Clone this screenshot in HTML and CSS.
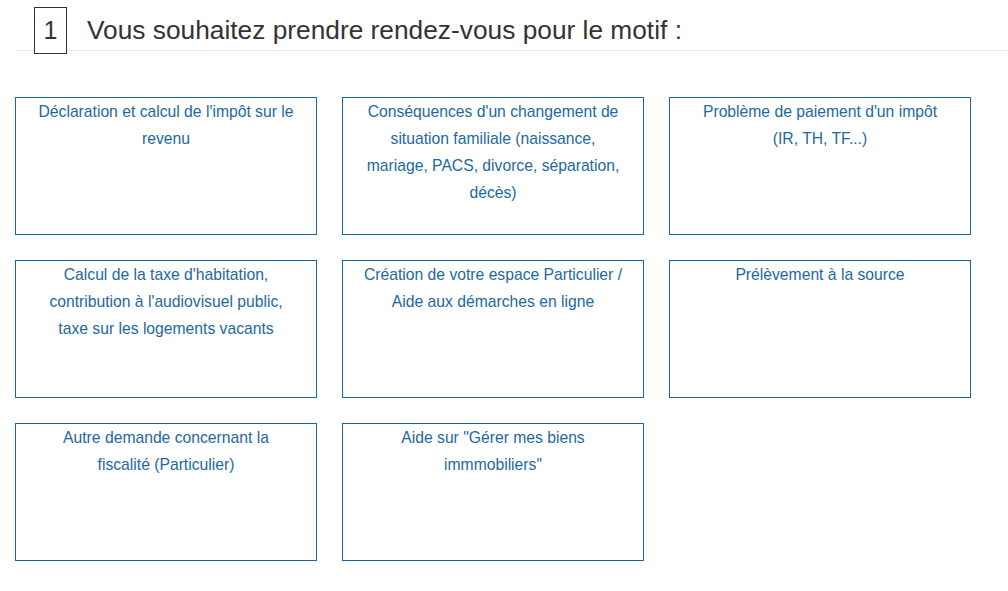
FILE: index.html
```html
<!DOCTYPE html>
<html lang="fr">
<head>
<meta charset="utf-8">
<title>Prise de rendez-vous</title>
<link rel="stylesheet" href="styles.css">
</head>
<body>
  <div class="step-head">
    <span class="step-num">1</span>
    <h2 class="step-title">Vous souhaitez prendre rendez-vous pour le motif :</h2>
  </div>
  <div class="motifs">
    <a class="motif" href="#">Déclaration et calcul de l'impôt sur le revenu</a>
    <a class="motif" href="#">Conséquences d'un changement de situation familiale (naissance, mariage, PACS, divorce, séparation, décès)</a>
    <a class="motif" href="#">Problème de paiement d'un impôt<br>(IR, TH, TF...)</a>
    <a class="motif" href="#">Calcul de la taxe d'habitation, contribution à l'audiovisuel public, taxe sur les logements vacants</a>
    <a class="motif" href="#">Création de votre espace Particulier / Aide aux démarches en ligne</a>
    <a class="motif" href="#">Prélèvement à la source</a>
    <a class="motif" href="#">Autre demande concernant la fiscalité (Particulier)</a>
    <a class="motif" href="#">Aide sur "Gérer mes biens immmobiliers"</a>
  </div>
</body>
</html>
```

FILE: styles.css
```css
html, body {
  margin: 0;
  padding: 0;
  background: #fff;
  font-family: "Liberation Sans", Arial, sans-serif;
}

.step-head {
  display: flex;
  align-items: flex-start;
  height: 50px;
  margin-left: 16px;
  padding-left: 18px;
  border-bottom: 1px solid #e6e6e6;
}

.step-num {
  box-sizing: border-box;
  display: flex;
  align-items: center;
  justify-content: center;
  width: 33px;
  height: 47px;
  margin-top: 7px;
  border: 1px solid #333;
  background: #fff;
  color: #333;
  font-size: 25px;
  flex-shrink: 0;
}

.step-title {
  margin: 13px 0 0 20px;
  font-size: 26.3px;
  font-weight: normal;
  line-height: 34px;
  color: #333;
}

.motifs {
  display: grid;
  grid-template-columns: repeat(3, 302px);
  grid-auto-rows: 138px;
  gap: 25px;
  padding: 46px 0 0 15px;
}

.motif {
  box-sizing: border-box;
  display: block;
  border: 1px solid #1b679b;
  padding: 0 20px;
  text-align: center;
  font-size: 15.7px;
  line-height: 27px;
  color: #22699f;
  text-decoration: none;
}
```
